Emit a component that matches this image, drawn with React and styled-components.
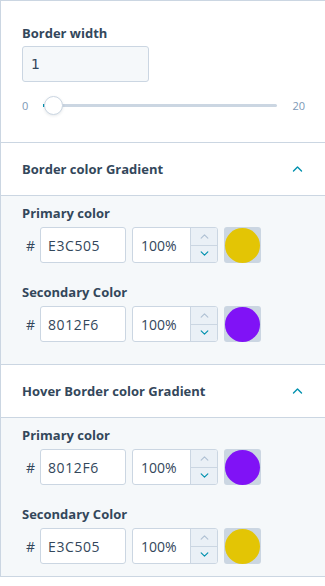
import React from "react";
import styled, { createGlobalStyle } from "styled-components";

const GlobalStyle = createGlobalStyle`
  body {
    margin: 0;
    background: #ffffff;
    font-family: "Open Sans", "Lato", sans-serif;
    color: #33475b;
  }
`;

const Wrapper = styled.div`
  width: 325px;
  box-sizing: border-box;
  border-left: 1px solid #cbd6e2;
  border-top: 1px solid #cbd6e2;
`;

const Panel = styled.div`
  background: #ffffff;
  padding: 24px 20px 28px 21px;
  border-bottom: 1px solid #cbd6e2;
`;

const Label = styled.div`
  font-size: 13px;
  font-weight: 700;
  line-height: 16px;
  color: #33475b;
  margin-bottom: ${(p) => p.gap || 6}px;
`;

const WidthInput = styled.input`
  box-sizing: border-box;
  width: 127px;
  height: 36px;
  padding: 0 8px;
  background: #f5f8fa;
  border: 1px solid #cbd6e2;
  border-radius: 3px;
  font-family: "DejaVu Sans", sans-serif;
  font-size: 14px;
  color: #33475b;
  outline: none;
`;

const SliderRow = styled.div`
  display: flex;
  align-items: center;
  height: 18px;
  margin-top: 14px;
  gap: 15px;
`;

const SliderEnd = styled.span`
  font-size: 11px;
  color: #7c98b6;
`;

const Track = styled.div`
  position: relative;
  flex: 1;
  height: 3px;
  border-radius: 2px;
  background: #cbd6e2;
`;

const Fill = styled.div`
  position: absolute;
  left: 0;
  top: 0;
  height: 3px;
  width: 2px;
  background: #0091ae;
`;

const Thumb = styled.div`
  position: absolute;
  left: 1px;
  top: -8px;
  box-sizing: border-box;
  width: 19px;
  height: 19px;
  border-radius: 50%;
  background: #ffffff;
  border: 1px solid #cbd6e2;
  box-shadow: 0 1px 3px rgba(45, 62, 80, 0.12);
`;

const Header = styled.div`
  display: flex;
  align-items: center;
  justify-content: space-between;
  height: 52px;
  padding: 0 22px 0 21px;
  background: #ffffff;
  border-bottom: 1px solid #cbd6e2;
  font-size: 13px;
  font-weight: 700;
  color: #33475b;
`;

const Body = styled.div`
  background: #f5f8fa;
  padding: 9px 20px ${(p) => (p.last ? 12 : 22)}px 21px;
  border-bottom: 1px solid #cbd6e2;
`;

const Field = styled.div`
  & + & {
    margin-top: 21px;
  }
`;

const Row = styled.div`
  display: flex;
  align-items: center;
  gap: 6px;
`;

const Hash = styled.span`
  width: 8px;
  margin-left: 4px;
  font-size: 14px;
  color: #33475b;
`;

const HexInput = styled.input`
  box-sizing: border-box;
  width: 86px;
  height: 36px;
  padding: 0 7px;
  background: #ffffff;
  border: 1px solid #cbd6e2;
  border-radius: 3px;
  font-family: inherit;
  font-size: 14px;
  letter-spacing: 0.6px;
  color: #33475b;
  outline: none;
`;

const Percent = styled.div`
  box-sizing: border-box;
  display: flex;
  width: 86px;
  height: 36px;
  background: #ffffff;
  border: 1px solid #cbd6e2;
  border-radius: 3px;
  overflow: hidden;
`;

const PercentValue = styled.span`
  flex: 1;
  display: flex;
  align-items: center;
  padding-left: 8px;
  font-size: 14px;
  color: #33475b;
`;

const Stepper = styled.div`
  display: flex;
  flex-direction: column;
  width: 26px;
  border-left: 1px solid #cbd6e2;
`;

const Step = styled.div`
  flex: 1;
  display: flex;
  align-items: center;
  justify-content: center;
  background: #eaf0f6;
  & + & {
    border-top: 1px solid #cbd6e2;
  }
`;

const Swatch = styled.div`
  width: 37px;
  height: 36px;
  border-radius: 3px;
  background: #cbd6e2;
  display: flex;
  align-items: center;
  justify-content: center;
`;

const Dot = styled.div`
  width: 35px;
  height: 35px;
  border-radius: 50%;
  background: ${(p) => p.color};
`;

const Chevron = ({ up, color, w = 9, h = 5 }) => (
  <svg width={w} height={h} viewBox="0 0 10 6" fill="none">
    <polyline
      points={up ? "1,5 5,1 9,5" : "1,1 5,5 9,1"}
      stroke={color}
      strokeWidth="1.4"
      strokeLinecap="round"
      strokeLinejoin="round"
    />
  </svg>
);

const ColorField = ({ label, hex, color }) => (
  <Field>
    <Label>{label}</Label>
    <Row>
      <Hash>#</Hash>
      <HexInput defaultValue={hex} />
      <Percent>
        <PercentValue>100%</PercentValue>
        <Stepper>
          <Step>
            <Chevron up color="#b0c1d4" />
          </Step>
          <Step>
            <Chevron color="#0091ae" />
          </Step>
        </Stepper>
      </Percent>
      <Swatch>
        <Dot color={color} />
      </Swatch>
    </Row>
  </Field>
);

const Section = ({ title, first, second, last }) => (
  <>
    <Header>
      <span>{title}</span>
      <Chevron up color="#0091ae" w={11} h={6} />
    </Header>
    <Body last={last}>
      <ColorField label="Primary color" hex={first.hex} color={first.color} />
      <ColorField label="Secondary Color" hex={second.hex} color={second.color} />
    </Body>
  </>
);

const yellow = { hex: "E3C505", color: "#e3c505" };
const purple = { hex: "8012F6", color: "#8012f6" };

export default function App() {
  return (
    <>
      <GlobalStyle />
      <Wrapper>
        <Panel>
          <Label gap={5}>Border width</Label>
          <WidthInput defaultValue="1" />
          <SliderRow>
            <SliderEnd>0</SliderEnd>
            <Track>
              <Fill />
              <Thumb />
            </Track>
            <SliderEnd>20</SliderEnd>
          </SliderRow>
        </Panel>
        <Section title="Border color Gradient" first={yellow} second={purple} />
        <Section
          title="Hover Border color Gradient"
          first={purple}
          second={yellow}
          last
        />
      </Wrapper>
    </>
  );
}
